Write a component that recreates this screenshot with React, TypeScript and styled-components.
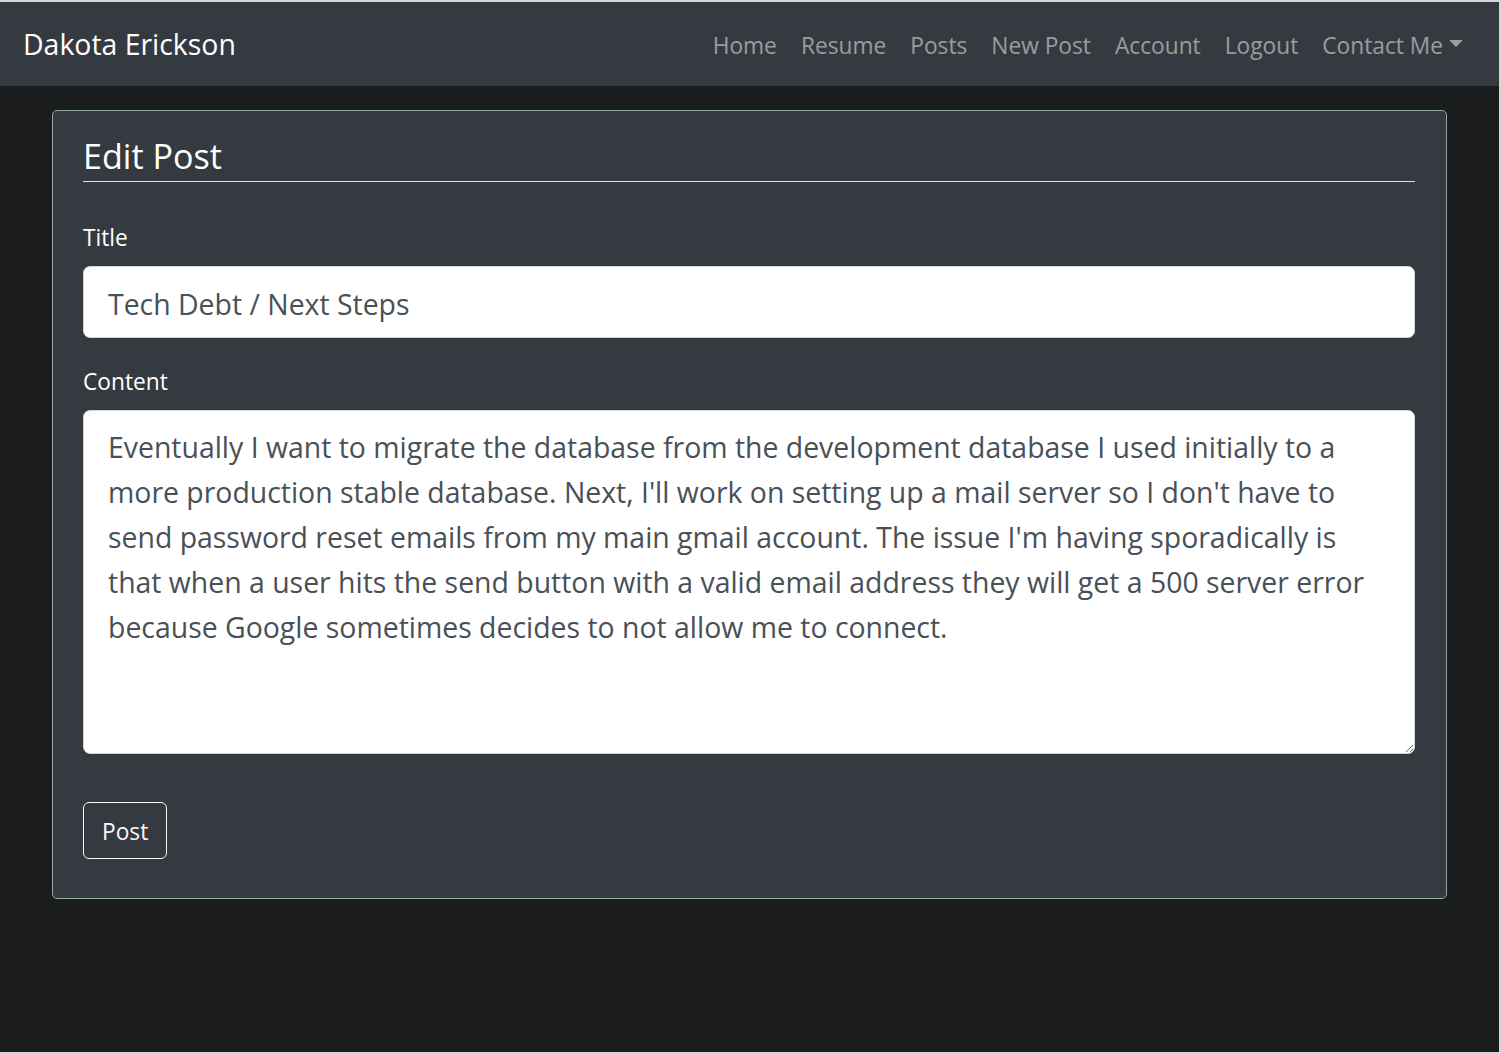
import React from "react";
import styled, { createGlobalStyle } from "styled-components";

const FONT = `"Open Sans", "Noto Sans", "Liberation Sans", sans-serif`;
const S = 0.947;
const fs = (px: number) => `${(px * S).toFixed(2)}px`;

const GlobalStyle = createGlobalStyle`
  html, body { margin: 0; padding: 0; }
  body {
    background: #1b1c1e;
    font-family: ${FONT};
    -webkit-font-smoothing: antialiased;
  }
  * { box-sizing: border-box; }
`;

const Frame = styled.div`
  min-height: 1054px;
  width: 1501px;
  border-top: 2px solid #d6d6d6;
  border-right: 2px solid #d6d6d6;
  border-bottom: 2px solid #d6d6d6;
  background: #1b1c1e;
`;

const Navbar = styled.nav`
  height: 84px;
  background: #343a40;
  display: flex;
  align-items: center;
  justify-content: space-between;
  padding: 3px 24px 0 23px;
`;

const Brand = styled.a`
  color: #ffffff;
  font-size: ${fs(30)};
  line-height: 1;
  text-decoration: none;
  padding-bottom: 2px;
`;

const NavList = styled.ul`
  display: flex;
  align-items: center;
  list-style: none;
  margin: 0;
  padding: 0;
`;

const NavLink = styled.a`
  display: flex;
  align-items: center;
  color: rgba(255, 255, 255, 0.5);
  font-size: ${fs(24)};
  padding: 12px 12px;
  text-decoration: none;
  white-space: nowrap;
`;

const Caret = styled.span`
  display: inline-block;
  margin-left: 6px;
  width: 0;
  height: 0;
  border-left: 7px solid transparent;
  border-right: 7px solid transparent;
  border-top: 7px solid rgba(255, 255, 255, 0.5);
  margin-bottom: 4px;
`;

const Container = styled.main`
  width: 1395px;
  margin: 24px 0 0 52px;
`;

const Card = styled.section`
  background: #343a40;
  border: 1px solid #93aaa2;
  border-radius: 5px;
  padding: 30px 31px 39px 30px;
`;

const Legend = styled.h2`
  margin: 0 0 36px;
  color: #ffffff;
  font-weight: 400;
  font-size: ${fs(36)};
  line-height: 30px;
  padding-bottom: 10px;
  border-bottom: 1px solid #dee2e6;
`;

const Group = styled.div`
  margin-bottom: 24px;
`;

const Label = styled.label`
  display: block;
  color: #ffffff;
  font-size: ${fs(24)};
  line-height: 36px;
  margin-bottom: 12px;
  padding-top: 2px;
  height: 36px;
`;

const fieldBase = `
  display: block;
  width: 100%;
  background: #ffffff;
  color: #495057;
  border: 1px solid #ced4da;
  border-radius: 7px;
  font-family: ${FONT};
  font-size: ${fs(30)};
  line-height: 45px;
  padding: 12px 24px;
  outline: none;
`;

const Input = styled.input`
  ${fieldBase}
  height: 72px;
  padding-top: 14px;
  padding-bottom: 10px;
`;

const TextArea = styled.textarea`
  ${fieldBase}
  height: 344px;
  padding-top: 14px;
  padding-right: 28px;
  resize: vertical;
`;

const Button = styled.button`
  margin-top: 24px;
  display: inline-block;
  background: transparent;
  color: #f8f9fa;
  border: 1px solid #f8f9fa;
  border-radius: 6px;
  font-family: ${FONT};
  font-size: ${fs(24)};
  line-height: 36px;
  padding: 10px 18px 8px;
  height: 57px;
  width: 84px;
  cursor: pointer;
`;

const links = ["Home", "Resume", "Posts", "New Post", "Account", "Logout"];

const content =
  "Eventually I want to migrate the database from the development database I used initially to a more production stable database. Next, I'll work on setting up a mail server so I don't have to send password reset emails from my main gmail account. The issue I'm having sporadically is that when a user hits the send button with a valid email address they will get a 500 server error because Google sometimes decides to not allow me to connect.";

export default function App() {
  return (
    <>
      <GlobalStyle />
      <Frame>
        <Navbar>
          <Brand href="#">Dakota Erickson</Brand>
          <NavList>
            {links.map((l) => (
              <li key={l}>
                <NavLink href="#">{l}</NavLink>
              </li>
            ))}
            <li>
              <NavLink href="#">
                Contact Me
                <Caret />
              </NavLink>
            </li>
          </NavList>
        </Navbar>
        <Container>
          <Card>
            <Legend>Edit Post</Legend>
            <Group>
              <Label htmlFor="title">Title</Label>
              <Input id="title" defaultValue="Tech Debt / Next Steps" />
            </Group>
            <Group>
              <Label htmlFor="content">Content</Label>
              <TextArea id="content" defaultValue={content} />
            </Group>
            <Button type="submit">Post</Button>
          </Card>
        </Container>
      </Frame>
    </>
  );
}
